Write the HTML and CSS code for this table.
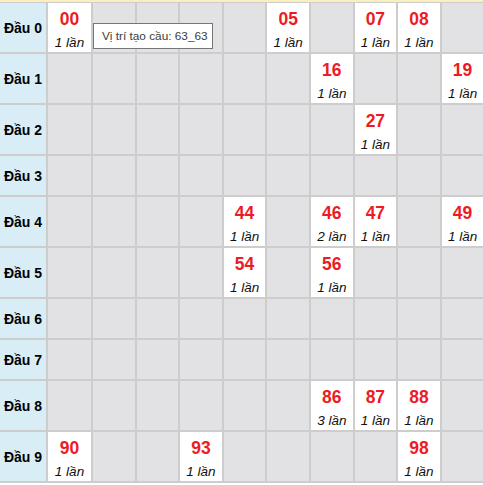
FILE: index.html
```html
<!DOCTYPE html>
<html lang="vi">
<head>
<meta charset="utf-8">
<link rel="stylesheet" href="styles.css">
</head>
<body>
<div class="board">
  <div class="row tall">
    <div class="head">Đầu 0</div>
    <div class="cell hit"><b>00</b><i>1 lần</i></div>
    <div class="cell"></div><div class="cell"></div><div class="cell"></div><div class="cell"></div>
    <div class="cell hit"><b>05</b><i>1 lần</i></div>
    <div class="cell"></div>
    <div class="cell hit"><b>07</b><i>1 lần</i></div>
    <div class="cell hit"><b>08</b><i>1 lần</i></div>
    <div class="cell"></div>
  </div>
  <div class="row tall">
    <div class="head">Đầu 1</div>
    <div class="cell"></div><div class="cell"></div><div class="cell"></div><div class="cell"></div><div class="cell"></div><div class="cell"></div>
    <div class="cell hit"><b>16</b><i>1 lần</i></div>
    <div class="cell"></div><div class="cell"></div>
    <div class="cell hit"><b>19</b><i>1 lần</i></div>
  </div>
  <div class="row tall">
    <div class="head">Đầu 2</div>
    <div class="cell"></div><div class="cell"></div><div class="cell"></div><div class="cell"></div><div class="cell"></div><div class="cell"></div><div class="cell"></div>
    <div class="cell hit"><b>27</b><i>1 lần</i></div>
    <div class="cell"></div><div class="cell"></div>
  </div>
  <div class="row short">
    <div class="head">Đầu 3</div>
    <div class="cell"></div><div class="cell"></div><div class="cell"></div><div class="cell"></div><div class="cell"></div><div class="cell"></div><div class="cell"></div><div class="cell"></div><div class="cell"></div><div class="cell"></div>
  </div>
  <div class="row tall">
    <div class="head">Đầu 4</div>
    <div class="cell"></div><div class="cell"></div><div class="cell"></div><div class="cell"></div>
    <div class="cell hit"><b>44</b><i>1 lần</i></div>
    <div class="cell"></div>
    <div class="cell hit"><b>46</b><i>2 lần</i></div>
    <div class="cell hit"><b>47</b><i>1 lần</i></div>
    <div class="cell"></div>
    <div class="cell hit"><b>49</b><i>1 lần</i></div>
  </div>
  <div class="row tall">
    <div class="head">Đầu 5</div>
    <div class="cell"></div><div class="cell"></div><div class="cell"></div><div class="cell"></div>
    <div class="cell hit"><b>54</b><i>1 lần</i></div>
    <div class="cell"></div>
    <div class="cell hit"><b>56</b><i>1 lần</i></div>
    <div class="cell"></div><div class="cell"></div><div class="cell"></div>
  </div>
  <div class="row short">
    <div class="head">Đầu 6</div>
    <div class="cell"></div><div class="cell"></div><div class="cell"></div><div class="cell"></div><div class="cell"></div><div class="cell"></div><div class="cell"></div><div class="cell"></div><div class="cell"></div><div class="cell"></div>
  </div>
  <div class="row short">
    <div class="head">Đầu 7</div>
    <div class="cell"></div><div class="cell"></div><div class="cell"></div><div class="cell"></div><div class="cell"></div><div class="cell"></div><div class="cell"></div><div class="cell"></div><div class="cell"></div><div class="cell"></div>
  </div>
  <div class="row tall">
    <div class="head">Đầu 8</div>
    <div class="cell"></div><div class="cell"></div><div class="cell"></div><div class="cell"></div><div class="cell"></div><div class="cell"></div>
    <div class="cell hit"><b>86</b><i>3 lần</i></div>
    <div class="cell hit"><b>87</b><i>1 lần</i></div>
    <div class="cell hit"><b>88</b><i>1 lần</i></div>
    <div class="cell"></div>
  </div>
  <div class="row tall">
    <div class="head">Đầu 9</div>
    <div class="cell hit"><b>90</b><i>1 lần</i></div>
    <div class="cell"></div><div class="cell"></div>
    <div class="cell hit"><b>93</b><i>1 lần</i></div>
    <div class="cell"></div><div class="cell"></div><div class="cell"></div><div class="cell"></div>
    <div class="cell hit"><b>98</b><i>1 lần</i></div>
    <div class="cell"></div>
  </div>
  <div class="tooltip">Vị trí tạo cầu: 63_63</div>
</div>
</body>
</html>
```

FILE: styles.css
```css
html, body {
  margin: 0;
  padding: 0;
  background: #ffffff;
}
body {
  font-family: "Liberation Sans", Arial, sans-serif;
  overflow: hidden;
}
.board {
  position: relative;
  width: 490px;
  display: flex;
  flex-direction: column;
  gap: 2px;
  background: #cdcdcd;
  border-top: 2px solid #fcefbe;
  padding: 1px 0 2px 0;
}
.row {
  display: grid;
  grid-template-columns: 46px 43px repeat(9, 41.6px);
  column-gap: 2px;
}
.row.tall { height: 49px; }
.row.short { height: 39px; }
.head {
  background: #d9edf7;
  display: flex;
  align-items: center;
  justify-content: center;
  font-weight: bold;
  font-size: 14px;
  color: #000;
  white-space: nowrap;
}
.cell {
  background: #e2e2e4;
}
.cell.hit {
  background: #ffffff;
  display: flex;
  flex-direction: column;
  align-items: center;
  padding-top: 6px;
  box-sizing: border-box;
}
.cell.hit b {
  font-weight: bold;
  font-size: 17.5px;
  line-height: 20px;
  color: #ed1c24;
}
.cell.hit i {
  font-style: italic;
  font-size: 13.5px;
  line-height: 18px;
  margin-top: 5px;
  color: #111;
  white-space: nowrap;
}
.tooltip {
  position: absolute;
  left: 93px;
  top: 21px;
  width: 120px;
  height: 26px;
  box-sizing: border-box;
  border: 1px solid #767676;
  background: #fff;
  color: #3c3c3c;
  font-size: 11.8px;
  line-height: 24px;
  padding-left: 8px;
  white-space: nowrap;
}
```
